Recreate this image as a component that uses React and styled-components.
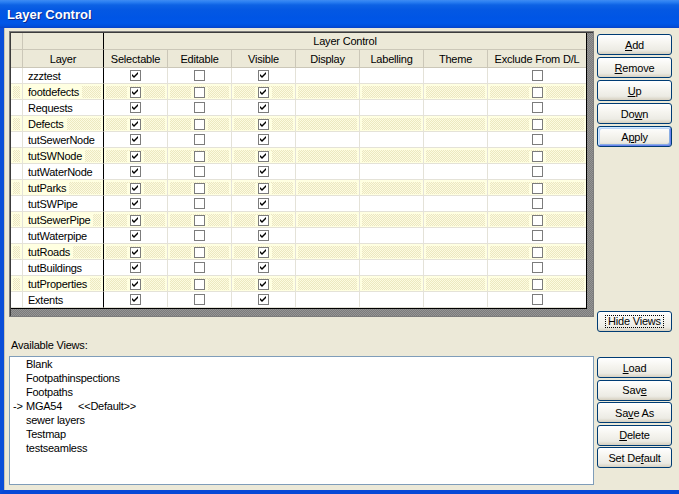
import React from 'react';
import styled, { createGlobalStyle, css } from 'styled-components';

const GlobalStyle = createGlobalStyle`
  html, body {
    margin: 0;
    padding: 0;
    background: #ece9d8;
  }
  body {
    font-family: "Liberation Sans", Arial, sans-serif;
    font-size: 11px;
    color: #000;
  }
`;

const layers = [
  'zzztest',
  'footdefects',
  'Requests',
  'Defects',
  'tutSewerNode',
  'tutSWNode',
  'tutWaterNode',
  'tutParks',
  'tutSWPipe',
  'tutSewerPipe',
  'tutWaterpipe',
  'tutRoads',
  'tutBuildings',
  'tutProperties',
  'Extents',
];

const columns = ['Selectable', 'Editable', 'Visible', 'Display', 'Labelling', 'Theme', 'Exclude From D/L'];

const views = ['Blank', 'Footpathinspections', 'Footpaths', 'MGA54', 'sewer layers', 'Testmap', 'testseamless'];

const Window = styled.div`
  width: 679px;
  height: 494px;
  display: flex;
  flex-direction: column;
  overflow: hidden;
  background: #ece9d8;
`;

const TitleBar = styled.div`
  flex: none;
  height: 28px;
  display: flex;
  align-items: center;
  padding-left: 7px;
  background: linear-gradient(
    180deg,
    #3f8cf3 0px,
    #2a7ff2 2px,
    #0d62e4 5px,
    #0458e3 10px,
    #0055e5 18px,
    #0057e8 23px,
    #0050dc 26px,
    #0843c8 28px
  );
  color: #fff;
  font-weight: bold;
  font-size: 13px;
  text-shadow: 1px 1px 0 #0c2a8c;
`;

const Body = styled.div`
  flex: 1;
  display: grid;
  grid-template-columns: 585px 75px;
  grid-template-rows: 301px 24px 129px;
  column-gap: 3px;
  padding: 3px 0 5px 5px;
  border-left: 4px solid #0a4ed8;
  border-bottom: 4px solid #0749d6;
  box-shadow: inset 1px 0 0 #c8c4b4;
`;

const GridFrame = styled.div`
  align-self: start;
  box-sizing: border-box;
  height: 286px;
  padding: 1px 0 0 1px;
  border: 1px solid #7b7b7b;
  box-shadow: inset 1px 1px 0 #3c3c3c;
  background: repeating-conic-gradient(#7c7c7c 0 25%, #959595 0 50%) 0 0 / 2px 2px;
`;

const Sheet = styled.div`
  width: 575px;
  border-right: 1px solid #000;
  border-bottom: 1px solid #000;
  background: #fff;
`;

const Row = styled.div`
  display: grid;
  grid-template-columns: 12px 81px repeat(6, 64px) 98px;
  height: ${(p) => p.$h || 16}px;
`;

const HeadCell = styled.div`
  box-sizing: border-box;
  display: flex;
  align-items: center;
  justify-content: center;
  background: #ece9d8;
  border-right: 1px solid ${(p) => (p.$divider ? '#000' : '#cbc7b8')};
  border-bottom: 1px solid #cbc7b8;
  letter-spacing: -0.2px;
  white-space: nowrap;
  grid-column: ${(p) => p.$span || 'auto'};
  &:last-child {
    border-right: none;
  }
`;

const altFill = css`
  padding: 2px 2px 1px 2px;
  background:
    repeating-conic-gradient(#ece8c0 0 25%, #fdfbe2 0 50%) 0 0 / 2px 2px content-box,
    linear-gradient(#ffffe1, #ffffe1) padding-box;
`;

const Cell = styled.div`
  box-sizing: border-box;
  display: flex;
  align-items: center;
  justify-content: ${(p) => (p.$left ? 'flex-start' : 'center')};
  background: #fff;
  border-right: 1px solid ${(p) => (p.$divider ? '#000' : '#e4e2d8')};
  border-bottom: 1px solid #e4e2d8;
  ${(p) => p.$alt && altFill}
  &:last-child {
    border-right: none;
  }
`;

const CellText = styled.span`
  align-self: stretch;
  display: flex;
  align-items: center;
  padding: 0 3px 0 ${(p) => (p.$alt ? 3 : 5)}px;
  letter-spacing: -0.25px;
  white-space: nowrap;
  background: ${(p) => (p.$alt ? '#ffffe1' : 'transparent')};
`;

const BoxWrap = styled.span`
  display: flex;
  padding: 0 3px;
  background: ${(p) => (p.$alt ? '#ffffe1' : 'transparent')};
`;

const Check = ({ checked, alt }) => (
  <BoxWrap $alt={alt}>
    <svg width="11" height="11" viewBox="0 0 11 11">
      <rect x="0.5" y="0.5" width="10" height="10" fill="#fff" stroke="#7c7c7c" />
      {checked && <polygon points="2,4 4,6 8,2 8,4 4,8 2,6" fill="#000" />}
    </svg>
  </BoxWrap>
);

const Side = styled.div`
  display: flex;
  flex-direction: column;
  gap: ${(p) => p.$gap || 2}px;
  padding-top: ${(p) => p.$top || 0}px;
`;

const Button = styled.button`
  flex: none;
  width: 75px;
  height: 21px;
  box-sizing: border-box;
  padding: 0;
  margin: 0;
  display: flex;
  align-items: center;
  justify-content: center;
  border: 1px solid #003c74;
  border-radius: 3px;
  background: linear-gradient(180deg, #ffffff 0%, #f6f5f0 40%, #ecebe4 80%, #d6d0c0 100%);
  font-family: "Liberation Sans", Arial, sans-serif;
  font-size: 11px;
  letter-spacing: -0.2px;
  color: #000;
  ${(p) =>
    p.$default &&
    css`
      box-shadow: inset 1px 1px 0 #cee7ff, inset -1px -1px 0 #6982ee, inset 2px 2px 0 #bcd4f6,
        inset -2px -2px 0 #89ade4;
    `}
  ${(p) =>
    p.$push &&
    css`
      margin-top: auto;
    `}
  u {
    text-decoration: underline;
    text-underline-offset: 1px;
  }
`;

const FocusRect = styled.span`
  border: 1px dotted #000;
  padding: 0 2px;
  line-height: 11px;
`;

const Label = styled.div`
  grid-column: 1 / 3;
  padding: 6px 0 0 2px;
  line-height: 14px;
  letter-spacing: -0.2px;
`;

const ListBox = styled.div`
  box-sizing: border-box;
  height: 129px;
  border: 1px solid #7f9db9;
  background: #fff;
  padding: 0 0 0 3px;
`;

const ListItem = styled.div`
  height: 14px;
  display: flex;
  align-items: center;
  letter-spacing: -0.25px;
  white-space: nowrap;
`;

const Pointer = styled.span`
  width: 13px;
  flex: none;
`;

const DefaultTag = styled.span`
  margin-left: 16px;
`;

export default function App() {
  return (
    <>
      <GlobalStyle />
      <Window>
        <TitleBar>Layer Control</TitleBar>
        <Body>
          <GridFrame>
            <Sheet>
              <Row $h={17}>
                <HeadCell />
                <HeadCell $divider />
                <HeadCell $span="3 / 10">Layer Control</HeadCell>
              </Row>
              <Row $h={18}>
                <HeadCell />
                <HeadCell $divider>Layer</HeadCell>
                {columns.map((c) => (
                  <HeadCell key={c}>{c}</HeadCell>
                ))}
              </Row>
              {layers.map((name, i) => {
                const alt = i % 2 === 1;
                return (
                  <Row key={name}>
                    <Cell $alt={alt} />
                    <Cell $alt={alt} $divider $left>
                      <CellText $alt={alt}>{name}</CellText>
                    </Cell>
                    <Cell $alt={alt}>
                      <Check checked alt={alt} />
                    </Cell>
                    <Cell $alt={alt}>
                      <Check alt={alt} />
                    </Cell>
                    <Cell $alt={alt}>
                      <Check checked alt={alt} />
                    </Cell>
                    <Cell $alt={alt} />
                    <Cell $alt={alt} />
                    <Cell $alt={alt} />
                    <Cell $alt={alt}>
                      <Check alt={alt} />
                    </Cell>
                  </Row>
                );
              })}
            </Sheet>
          </GridFrame>

          <Side $top={3}>
            <Button>
              <span>
                <u>A</u>dd
              </span>
            </Button>
            <Button>
              <span>
                <u>R</u>emove
              </span>
            </Button>
            <Button>
              <span>
                <u>U</u>p
              </span>
            </Button>
            <Button>
              <span>
                Do<u>w</u>n
              </span>
            </Button>
            <Button $default>
              <span>
                A<u>p</u>ply
              </span>
            </Button>
            <Button $push>
              <FocusRect>Hide Views</FocusRect>
            </Button>
          </Side>

          <Label>Available Views:</Label>

          <ListBox>
            {views.map((v) => (
              <ListItem key={v}>
                <Pointer>{v === 'MGA54' ? '->' : ''}</Pointer>
                {v}
                {v === 'MGA54' && <DefaultTag>&lt;&lt;Default&gt;&gt;</DefaultTag>}
              </ListItem>
            ))}
          </ListBox>

          <Side $top={1} $gap={1.5}>
            <Button>
              <span>
                <u>L</u>oad
              </span>
            </Button>
            <Button>
              <span>
                Sav<u>e</u>
              </span>
            </Button>
            <Button>
              <span>
                Sa<u>v</u>e As
              </span>
            </Button>
            <Button>
              <span>
                <u>D</u>elete
              </span>
            </Button>
            <Button>
              <span>
                Set De<u>f</u>ault
              </span>
            </Button>
          </Side>
        </Body>
      </Window>
    </>
  );
}
